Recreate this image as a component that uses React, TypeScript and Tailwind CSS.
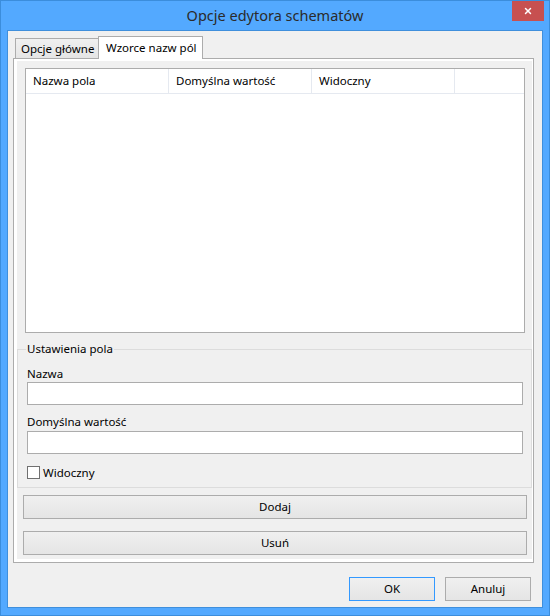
import { X } from 'lucide-react'

const btn =
  'h-[24px] border border-[#acacac] bg-gradient-to-b from-[#f0f0f0] to-[#e5e5e5] flex items-center justify-center text-black'

function ListHeader() {
  const cols = ['Nazwa pola', 'Domyślna wartość', 'Widoczny']
  return (
    <div className="flex h-[25px] border-b border-[#e5e9f0] bg-white">
      {cols.map((c) => (
        <div
          key={c}
          className="w-[143px] shrink-0 border-r border-[#e5e9f0] pl-[7px] flex items-center"
        >
          {c}
        </div>
      ))}
      <div className="flex-1" />
    </div>
  )
}

export default function App() {
  return (
    <div className="w-[550px] h-[616px] bg-[#53a9ff] border border-[#3b8ddc] flex flex-col font-['Noto_Sans',sans-serif] text-[11.5px] leading-[16px] text-black">
      {/* title bar */}
      <div className="relative h-[29px] flex items-center justify-center">
        <span className="text-[14.5px] text-[#2b2b2b] -mt-[1px]">Opcje edytora schematów</span>
        <button className="absolute right-[5px] top-0 w-[32px] h-[20px] bg-[#c75050] flex items-center justify-center">
          <X className="w-[10px] h-[10px] text-white" strokeWidth={3.5} />
        </button>
      </div>

      {/* client area */}
      <div className="mx-[6px] h-[578px] border border-[#3f8fdc] bg-[#f0f0f0] flex flex-col">
        {/* tabs */}
        <div className="mt-[5px] ml-[7px] h-[22px] flex items-end">
          <div className="h-[20px] w-[84px] border border-b-0 border-[#acacac] bg-gradient-to-b from-[#f0f0f0] to-[#e5e5e5] pl-[5px] flex items-center">
            Opcje główne
          </div>
          <div className="relative z-10 -ml-px -mb-px h-[23px] w-[105px] border border-b-0 border-[#acacac] bg-white pl-[7px] flex items-center">
            Wzorce nazw pól
          </div>
        </div>

        {/* tab body */}
        <div className="ml-[5px] w-[521px] h-[505px] border border-[#acacac] bg-white pt-[2px] pl-[3px] pr-[1px] pb-[3px]">
          <div className="h-full bg-[#f0f0f0] flex flex-col pb-[4px]">
            <div className="ml-[8px] mt-[7px] w-[500px] h-[265px] border border-[#acacac] bg-white">
              <ListHeader />
            </div>

            {/* group box */}
            <div className="relative mt-[16px] border border-[#dcdcdc] px-[9px] pt-[16px] pb-[8px]">
              <span className="absolute left-[8px] top-[-9px] px-[1px] bg-[#f0f0f0]">Ustawienia pola</span>
              <div className="h-[16px]">Nazwa</div>
              <div className="w-[496px] h-[23px] border border-[#acacac] bg-white" />
              <div className="mt-[9px] h-[16px]">Domyślna wartość</div>
              <div className="mt-[1px] w-[496px] h-[23px] border border-[#acacac] bg-white" />
              <div className="mt-[12px] h-[13px] flex items-center gap-[3px]">
                <div className="w-[13px] h-[13px] border border-[#707070] bg-white" />
                <span>Widoczny</span>
              </div>
            </div>

            <button className={`${btn} mt-[7px] ml-[6px] w-[504px]`}>Dodaj</button>
            <button className={`${btn} mt-[12px] ml-[6px] w-[504px]`}>Usuń</button>
          </div>
        </div>

        {/* dialog buttons */}
        <div className="mt-[14px] flex justify-end gap-[10px] pr-[11px]">
          <button className={`${btn} w-[86px] !border-[#3399ff]`}>OK</button>
          <button className={`${btn} w-[86px]`}>Anuluj</button>
        </div>
      </div>
    </div>
  )
}
